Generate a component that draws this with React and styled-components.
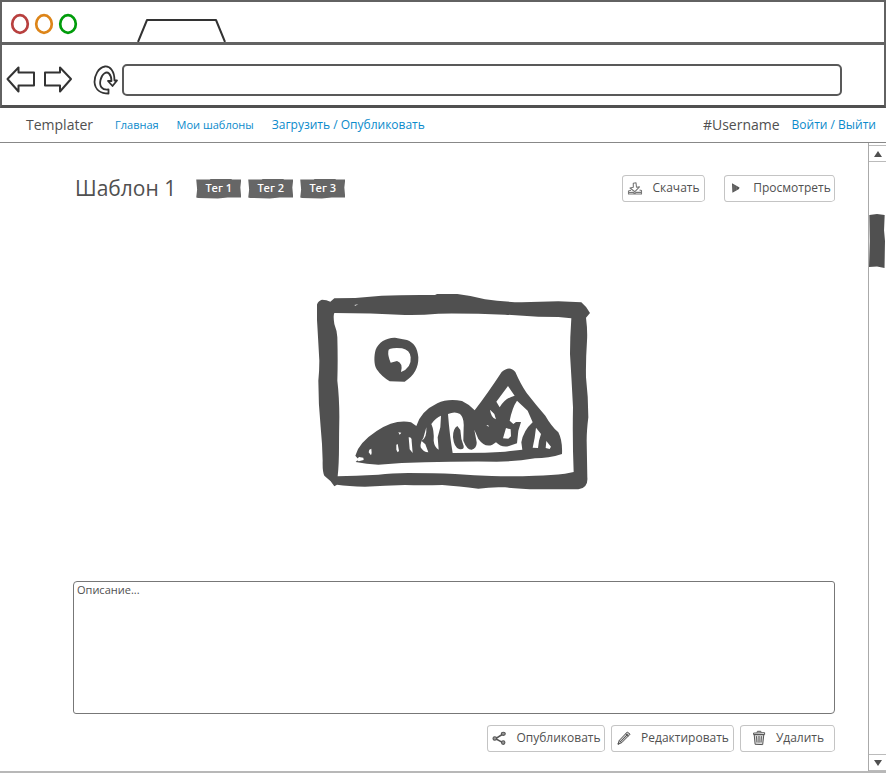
import React from "react";
import styled, { createGlobalStyle } from "styled-components";

const ink = "#505050";
const frame = "#626262";
const blue = "#0a8acb";

const GlobalStyle = createGlobalStyle`
  *, *::before, *::after { box-sizing: border-box; }
  body { margin: 0; background: #fff; }
  body, button, input, textarea { font-family: "Open Sans", "Noto Sans", sans-serif; color: ${ink}; }
`;

const Window = styled.div`
  min-height: 100vh;
  display: flex;
  flex-direction: column;
  border-bottom: 2px solid #b8b8b8;
`;

const Chrome = styled.header`
  border: 2px solid ${frame};
  border-bottom: 3px solid ${ink};
`;

const TitleBar = styled.div`
  height: 43px;
  display: flex;
  align-items: center;
  padding: 3px 0 0 8px;
  border-bottom: 3px solid ${frame};
`;

const Lights = styled.div`
  display: flex;
  gap: 4px;
`;

const Light = styled.button`
  width: 20px;
  height: 22px;
  padding: 0;
  border: 0;
  background: none;
  color: ${(p) => p.$color};
  svg { display: block; }
`;

const Tab = styled.div`
  align-self: flex-end;
  height: 24px;
  margin-left: 59px;
  svg { display: block; }
`;

const Toolbar = styled.div`
  height: 60px;
  display: flex;
  align-items: center;
  padding: 10px 42px 0 4px;
`;

const ToolButton = styled.button`
  width: 30px;
  height: 30px;
  margin-right: ${(p) => p.$after}px;
  padding: 0;
  border: 0;
  background: none;
  svg { display: block; }
`;

const Address = styled.input`
  flex: 1;
  min-width: 0;
  height: 32px;
  padding: 0 8px;
  border: 2px solid #595959;
  border-radius: 5px;
  font-size: 14px;
`;

const Nav = styled.nav`
  height: 35px;
  display: flex;
  align-items: center;
  padding: 0 10px 0 26px;
  border-bottom: 1px solid #888;
`;

const Brand = styled.span`
  margin-right: 22px;
  font-size: 14px;
  line-height: 20px;
`;

const Links = styled.div`
  display: flex;
  flex: 1;
  gap: 18px;
`;

const NavLink = styled.a`
  font-size: ${(p) => (p.$large ? 12 : 11)}px;
  line-height: 20px;
  color: ${blue};
  text-decoration: none;
  white-space: nowrap;
`;

const User = styled.span`
  margin-right: 12px;
  font-size: 14px;
  line-height: 20px;
`;

const Body = styled.div`
  flex: 1;
  display: flex;
`;

const Main = styled.main`
  flex: 1;
  min-width: 0;
  display: flex;
  flex-direction: column;
  padding: 32px 33px 19px 73px;
`;

const Row = styled.div`
  display: flex;
  align-items: center;
  justify-content: ${(p) => (p.$end ? "flex-end" : "flex-start")};
  gap: ${(p) => p.$gap}px;
`;

const Title = styled.h1`
  margin: 0 20px 0 2px;
  font-size: 21px;
  font-weight: 400;
  line-height: 27px;
  white-space: nowrap;
`;

const Tags = styled.div`
  flex: 1;
  display: flex;
  gap: 7px;
`;

const Tag = styled.span`
  min-width: 45px;
  height: 20px;
  font-size: 11px;
  font-weight: 600;
  line-height: 18px;
  text-align: center;
  color: #fff;
  background: #666;
  clip-path: polygon(0 5%, 30% 5%, 34% 0, 75% 0, 80% 5%, 100% 5%, 98% 45%, 100% 95%, 70% 95%, 48% 100%, 4% 97%, 0 95%, 2% 55%);
`;

const Button = styled.button`
  min-width: ${(p) => p.$width}px;
  height: 27px;
  display: flex;
  align-items: center;
  justify-content: center;
  gap: 9px;
  padding: 0 3px 1px;
  border: 1px solid #c4c4c4;
  border-radius: 4px 3px 5px 3px / 3px 5px 3px 4px;
  background: #fff;
  font-size: 12px;
  line-height: 24px;
  white-space: nowrap;
  svg { display: block; flex: none; }
`;

const Preview = styled.figure`
  flex: 1;
  display: flex;
  align-items: center;
  justify-content: center;
  margin: 0;
`;

const Description = styled.textarea`
  display: block;
  width: 100%;
  height: 133px;
  margin-bottom: 11px;
  padding: 0 3px;
  resize: none;
  border: 1px solid #777;
  border-radius: 4px 3px 4px 3px;
  font-size: 11px;
  line-height: 15px;
  background: #fff;
`;

const ScrollBar = styled.div`
  width: 18px;
  display: flex;
  flex-direction: column;
  border-left: 1px solid #aaa;
  padding-top: 2px;
`;

const ScrollButton = styled.button`
  width: 100%;
  height: 17px;
  padding: 0;
  border: 1px solid #bbb;
  border-width: 1px 0;
  background: #fff;
  svg { display: block; margin: 0 auto; }
`;

const Track = styled.div`
  flex: 1;
  padding: 52px 1px 0 0;
`;

const Thumb = styled.div`
  height: 54px;
  background: ${ink};
  clip-path: polygon(2% 2%, 50% 0, 98% 2%, 94% 30%, 100% 50%, 97% 100%, 50% 97%, 0 98%, 5% 50%);
`;

const LightIcon = () => (
  <svg width="20" height="22" viewBox="0 0 20 22">
    <ellipse cx="10" cy="11" rx="7.8" ry="8.8" fill="none" stroke="currentColor" strokeWidth="2.7" />
  </svg>
);

const Stroke = ({ w, h, box, d, sw = 2 }) => (
  <svg width={w} height={h} viewBox={box} fill="none" stroke="#333" strokeWidth={sw} strokeLinejoin="round">
    <path d={d} />
  </svg>
);

const DownloadIcon = () => (
  <svg width="16" height="16" viewBox="0 0 16 16" fill="none" stroke="#777" strokeWidth="1.1" strokeLinejoin="round">
    <path d="M6.3 3.2 9 2.8l.5 4.4 3-.3-4.6 4.8L3 8l3.3-.8z" />
    <path d="M4 10.2 1.5 11v3H14.500v-3.500l-2-.5M1.800 12.500 6 12.200l1.500 1 2-1 4.500.2" />
  </svg>
);

const PlayIcon = () => (
  <svg width="16" height="16" viewBox="0 0 16 16" fill="#555">
    <path d="M4 3.200 11.500 7.600 11 9 4.400 12.800z" />
    <path d="M6 5.200v5.500M8.200 6.200v4" stroke="#999" strokeWidth=".5" />
  </svg>
);

const ShareIcon = () => (
  <svg width="16" height="16" viewBox="0 0 16 16" fill="none" stroke="#555" strokeWidth="1.1">
    <path d="m12 4-7.4 4.6 7.2 4" strokeWidth="1.600" />
    <ellipse cx="12.300" cy="3.800" rx="2" ry="1.600" fill="#999" />
    <ellipse cx="3.800" cy="8.500" rx="1.800" ry="1.700" fill="#999" />
    <ellipse cx="12.200" cy="12.600" rx="1.700" ry="1.800" fill="#999" />
  </svg>
);

const PencilIcon = () => (
  <svg width="16" height="16" viewBox="0 0 16 16" fill="none" stroke="#555" strokeWidth="1" strokeLinejoin="round">
    <path d="M2 14.2 3.2 10.5 11.3 2l2.8 2.2-8.4 8.5z" fill="#ccc" />
    <path d="m3.2 10.5 2.5 2.2M9.6 3.8l2.8 2.3M4.6 11.6l7.2-7.4M2 14.2l1.6-.6-1-.9z" />
  </svg>
);

const TrashIcon = () => (
  <svg width="16" height="16" viewBox="0 0 16 16" fill="none" stroke="#555" strokeWidth="1" strokeLinejoin="round">
    <path d="m3.2 4.6.9 9.7 7.6.3 1.1-10z" fill="#ddd" />
    <path d="M2.5 3.1 13.6 2.7v1.9H2.6zM6 2.6l.4-1.3h3.4l.4 1.2" />
    <path d="m5.5 6.2.5 6.3M8 6v6.7M10.4 6.2 10 12.5" />
  </svg>
);

const Landscape = () => (
  <svg width="275" height="197" viewBox="36 37 825 591" role="img" aria-label="Изображение" fill={ink}>
    <path
      fillRule="evenodd"
      d="M34 85Q34 62 51 57 65 57 76 63L88 53Q160 53 230 45 300 42 390 43L396 40 457 40Q500 45 540 56 590 63 650 65L760 62 829 65Q845 78 855 97L843 111Q848 150 846 180 842 240 843 290 850 350 850 410 845 450 845 480L847 590Q850 622 820 626L700 626Q640 625 600 620 560 618 520 624 460 617 412 613 350 615 300 613 240 615 180 618 130 616 96 612L88 617 77 602 58 585Q52 573 53 540 52 490 47 440 40 370 40 300 43 270 43 240 38 150 34 85ZM88 97Q84 105 88 130 96 150 97 170 99 240 97 300 103 350 103 410 102 460 102 500 102 550 98 587 150 585 220 582 260 578 310 577 390 577 450 580 510 584 560 586 630 588 690 585 740 584 780 579L806 574Q802 480 804 380 800 300 795 220 795 170 799 113L760 109 700 108Q650 105 600 102 500 98 400 99 350 104 300 103 200 97 88 97Z"
    />
    <path
      fillRule="evenodd"
      d="M212 207C220 185 245 170 270 171L306 178C326 185 338 202 340 230 341 260 328 285 299 303L254 302Q230 288 215 266C206 250 207 225 212 207ZM250 211Q248 226 257 246L276 241Q295 247 288 274 320 262 317 230 315 208 291 203 250 200 250 211Z"
    />
    <path d="M151 525Q160 487 215 451 270 415 318 425L334 436Q348 391 397 368 428 353 471 361 493 371 509 389 548 338 590 274 614 253 631 274 647 311 665 337 693 373 721 405 740 438 760 455 773 480 771 520 730 533 690 533 630 543 575 543 460 542 360 545 290 546 220 552 185 550 152 544L160 536Z" />
    <g fill="#fff">
      <path d="m154 537 8-8 13 2 1 7-15 4zM193 507l6-3 1 13-2 7-7-9zM274 492l4-2 4 21-4 4-4-8zM280 455l9 1-5 6zM311 470q10-1 9 12l3 35-9-11zM364 440q2 35-15 40l12 11 9 24q-15 0-23-15-2-15 8-28z" />
      <path d="M379 430Q393 410 408 405L406 440 398 470 401 507Q388 500 386 480 388 450 379 430Z" />
      <path d="M429 400Q450 391 465 400 478 412 476 440L475 480Q486 508 500 507 516 502 515 485L508 447 520 475Q540 502 562 492L573 485Q590 502 612 496L636 488 640 450 648 424 633 424 625 430 614 420Q622 380 636 360L668 390 683 425Q655 450 649 485L652 507 600 513 540 516 443 517Q434 465 429 400Z" />
      <path d="M609 316Q618 330 629 345 600 352 584 380L574 363ZM555 387l13 13 5 16q-15-5-18-29zM603 442l14 4 1 21-8 7-16-1zM544 433l6 1 1 5zM693 441l15 19-6 20-3 22-16-1 6-30zM724 481l14 17-4 7-12-3z" />
      <path d="m148 73 12-2-9 4z" />
    </g>
    <path d="M457 436Q443 445 444 470 447 500 462 505 478 508 476 496 467 475 466 448Z" />
  </svg>
);

const links = [
  { text: "Главная" },
  { text: "Мои шаблоны" },
  { text: "Загрузить / Опубликовать", large: true },
];
const tags = ["Тег 1", "Тег 2", "Тег 3"];

export default function App() {
  return (
    <>
      <GlobalStyle />
      <Window>
        <Chrome>
          <TitleBar>
            <Lights>
              <Light $color="#b8403f" aria-label="Закрыть"><LightIcon /></Light>
              <Light $color="#dd8519" aria-label="Свернуть"><LightIcon /></Light>
              <Light $color="#009c0b" aria-label="Развернуть"><LightIcon /></Light>
            </Lights>
            <Tab>
              <Stroke w={90} h={24} box="0 0 90 24" d="M1 24 10 2H79l9 22" />
            </Tab>
          </TitleBar>
          <Toolbar>
            <ToolButton $after={7} aria-label="Назад">
              <Stroke w={30} h={30} box="0 0 30 30" d="M1.5 14 12.5 2.5V7.5H28V20.5H12.5V26.5Z" />
            </ToolButton>
            <ToolButton $after={18} aria-label="Вперёд">
              <Stroke w={30} h={30} box="0 0 30 30" d="M28 14 17 2.5V7.5H2V20.5H17V26.5Z" />
            </ToolButton>
            <ToolButton $after={1} aria-label="Обновить">
              <Stroke
                w={30}
                h={30}
                box="0 0 30 30"
                sw={1.8}
                d="M17.5 28.5V24.5C11 25.5 8 21 9.500 15 11 8.500 15.500 6 18 8.500 20 10.500 20.500 14 20.500 16H17L21.500 21 26 15.500 23.500 15.500C23.500 6 19 1 14 1.500 7 2.500 3.500 11 3.500 17 4 25 10 28.500 17.500 28.500Z"
              />
            </ToolButton>
            <Address type="text" aria-label="Адрес" />
          </Toolbar>
        </Chrome>
        <Nav>
          <Brand>Templater</Brand>
          <Links>
            {links.map(({ text, large }) => (
              <NavLink href="#" key={text} $large={large}>{text}</NavLink>
            ))}
          </Links>
          <User>#Username</User>
          <NavLink href="#" $large>Войти / Выйти</NavLink>
        </Nav>
        <Body>
          <Main>
            <Row $gap={0}>
              <Title>Шаблон 1</Title>
              <Tags>
                {tags.map((text) => (
                  <Tag key={text}>{text}</Tag>
                ))}
              </Tags>
              <Row $gap={19}>
                <Button $width={83}><DownloadIcon />Скачать</Button>
                <Button $width={111}><PlayIcon />Просмотреть</Button>
              </Row>
            </Row>
            <Preview><Landscape /></Preview>
            <Description aria-label="Описание" defaultValue="Описание..." />
            <Row $gap={6} $end>
              <Button $width={118}><ShareIcon />Опубликовать</Button>
              <Button $width={123}><PencilIcon />Редактировать</Button>
              <Button $width={95}><TrashIcon />Удалить</Button>
            </Row>
          </Main>
          <ScrollBar>
            <ScrollButton aria-label="Прокрутить вверх">
              <svg width="10" height="8" viewBox="0 0 10 8" fill={ink}><path d="M1 7 5 1 9 7Z" /></svg>
            </ScrollButton>
            <Track><Thumb /></Track>
            <ScrollButton aria-label="Прокрутить вниз">
              <svg width="10" height="8" viewBox="0 0 10 8" fill={ink}><path d="M1 1 5 7 9 1Z" /></svg>
            </ScrollButton>
          </ScrollBar>
        </Body>
      </Window>
    </>
  );
}
